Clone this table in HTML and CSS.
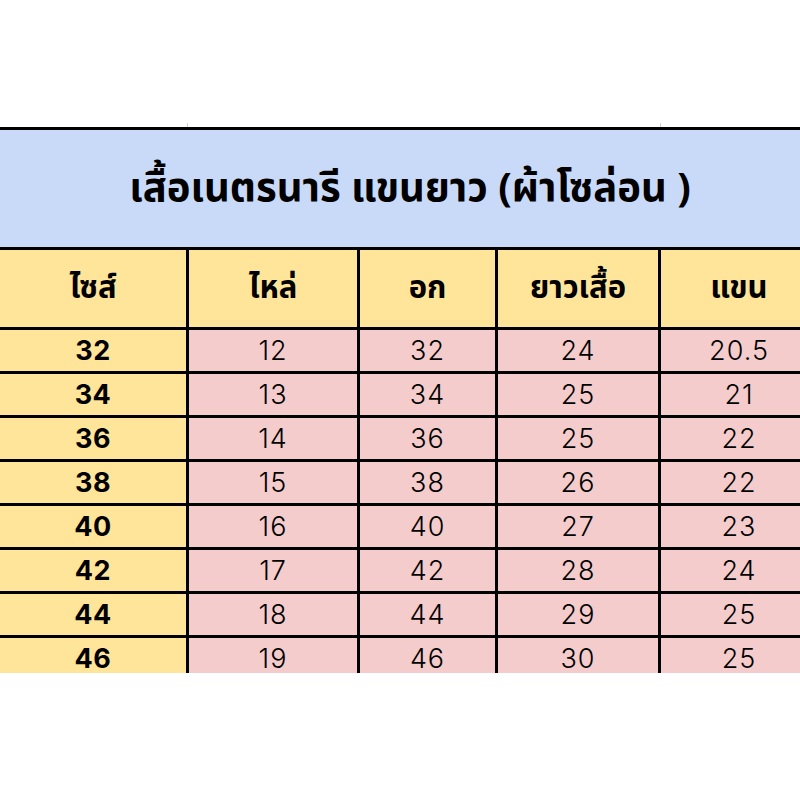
FILE: index.html
```html
<!DOCTYPE html>
<html lang="th">
<head>
<meta charset="utf-8">
<title>ตารางไซส์ เสื้อเนตรนารี</title>
<link rel="stylesheet" href="styles.css">
</head>
<body>
<div class="page">
  <div class="ticks">
    <span class="tick tick-a"></span>
    <span class="tick tick-b"></span>
  </div>
  <div class="sheet">
    <div class="grid">
      <div class="cell title">เสื้อเนตรนารี แขนยาว (ผ้าโซล่อน )</div>

      <div class="cell head">ไซส์</div>
      <div class="cell head">ไหล่</div>
      <div class="cell head">อก</div>
      <div class="cell head">ยาวเสื้อ</div>
      <div class="cell head">แขน</div>

      <div class="cell size">32</div><div class="cell val">12</div><div class="cell val">32</div><div class="cell val">24</div><div class="cell val">20.5</div>
      <div class="cell size">34</div><div class="cell val">13</div><div class="cell val">34</div><div class="cell val">25</div><div class="cell val">21</div>
      <div class="cell size">36</div><div class="cell val">14</div><div class="cell val">36</div><div class="cell val">25</div><div class="cell val">22</div>
      <div class="cell size">38</div><div class="cell val">15</div><div class="cell val">38</div><div class="cell val">26</div><div class="cell val">22</div>
      <div class="cell size">40</div><div class="cell val">16</div><div class="cell val">40</div><div class="cell val">27</div><div class="cell val">23</div>
      <div class="cell size">42</div><div class="cell val">17</div><div class="cell val">42</div><div class="cell val">28</div><div class="cell val">24</div>
      <div class="cell size">44</div><div class="cell val">18</div><div class="cell val">44</div><div class="cell val">29</div><div class="cell val">25</div>
      <div class="cell size last">46</div><div class="cell val last">19</div><div class="cell val last">46</div><div class="cell val last">30</div><div class="cell val last">25</div>
    </div>
  </div>
</div>
</body>
</html>
```

FILE: styles.css
```css
* { box-sizing: border-box; }

html, body {
  margin: 0;
  padding: 0;
  background: #ffffff;
}

.page {
  width: 800px;
  height: 800px;
  overflow: hidden;
  padding-top: 123px;
}

.ticks {
  display: flex;
  height: 4px;
}

.tick {
  display: block;
  height: 4px;
  border-right: 1px solid #d0d0d0;
}

.tick-a { width: 188px; }
.tick-b { width: 473px; }

.sheet {
  width: 800px;
  height: 546px;
  overflow: hidden;
}

.grid {
  width: 820px;
  display: grid;
  grid-template-columns: 189px 171px 138px 163px 159px;
  grid-template-rows: 120px 80px repeat(7, 44px) 35px;
  border-top: 3px solid #000;
}

.cell {
  display: flex;
  align-items: center;
  justify-content: center;
  border-right: 3px solid #000;
  border-bottom: 3px solid #000;
  color: #000;
  font-family: "Noto Sans Thai", "Noto Sans", "Inter", sans-serif;
}

.title {
  grid-column: 1 / -1;
  background: #c9daf8;
  font-size: 40px;
  font-weight: 700;
  border-right: none;
}

.head {
  background: #ffe599;
  font-size: 31px;
  font-weight: 700;
}

.size {
  background: #ffe599;
  font-family: "Inter", "Roboto", sans-serif;
  font-size: 27px;
  line-height: 1;
  font-weight: 700;
  letter-spacing: 0.5px;
}

.val {
  background: #f4cccc;
  font-family: "Inter", "Roboto", sans-serif;
  font-size: 27px;
  line-height: 1;
  font-weight: 300;
  letter-spacing: 1px;
}

.last {
  border-bottom: none;
  padding-top: 5px;
}
```
